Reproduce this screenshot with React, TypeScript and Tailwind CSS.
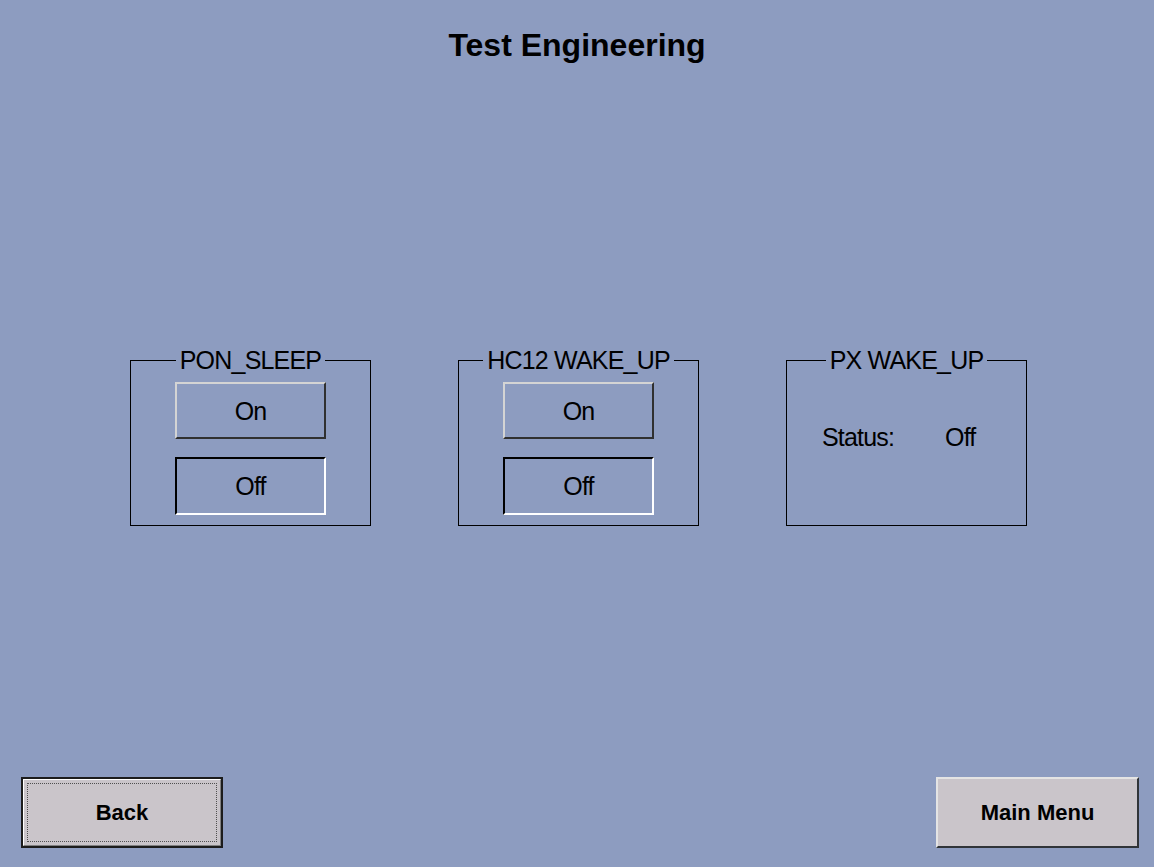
import React from 'react';

const font = { fontFamily: '"Liberation Sans", Arial, sans-serif' };

// raised bevel button sitting on the blue panel
function RaisedButton({ label }: { label: string }) {
  return (
    <button className="w-[151px] h-[57px] bg-transparent border-2 border-t-[#d4d4d4] border-l-[#d4d4d4] border-b-[#303030] border-r-[#303030] text-[25px] leading-[24px] tracking-[-0.8px] text-black">
      {label}
    </button>
  );
}

// pressed (sunken) state
function SunkenButton({ label }: { label: string }) {
  return (
    <button className="w-[151px] h-[58px] bg-transparent border-2 border-t-black border-l-black border-b-white border-r-white text-[25px] leading-[24px] tracking-[-0.8px] text-black">
      {label}
    </button>
  );
}

function GroupBox({ title, children }: { title: string; children: React.ReactNode }) {
  return (
    <fieldset className="w-[241px] h-[178px] border border-black">
      <legend className="mx-auto px-[4px] text-[25px] leading-[24px] tracking-[-0.8px] text-black">{title}</legend>
      {children}
    </fieldset>
  );
}

function ToggleGroup({ title }: { title: string }) {
  return (
    <GroupBox title={title}>
      <div className="flex flex-col items-center pt-[10px] gap-[18px]">
        <RaisedButton label="On" />
        <SunkenButton label="Off" />
      </div>
    </GroupBox>
  );
}

export default function App() {
  return (
    <div className="w-full h-[867px] bg-[#8d9cc0] flex flex-col" style={font}>
      <h1 className="pt-[29px] text-center text-[32px] leading-[32px] font-bold text-black">
        Test Engineering
      </h1>

      <div className="mt-[287px] flex pl-[130px] gap-[87px]">
        <ToggleGroup title="PON_SLEEP" />
        <ToggleGroup title="HC12 WAKE_UP" />
        <GroupBox title="PX WAKE_UP">
          <div className="flex pt-[53px] pl-[35px] text-[25px] leading-[24px] tracking-[-0.8px] text-black">
            <span className="w-[123px]">Status:</span>
            <span>Off</span>
          </div>
        </GroupBox>
      </div>

      <div className="flex-1" />

      <div className="flex justify-between pl-[21px] pr-[15px] pb-[19px]">
        <button className="w-[202px] h-[71px] p-0 bg-[#cac5ca] border-2 border-[#1c1c1c]">
          <span className="block h-full border border-t-white border-l-white border-b-[#808080] border-r-[#808080] p-[3px]">
            <span className="flex h-full items-center justify-center border border-dotted border-[#505050] text-[22px] font-bold text-black">
              Back
            </span>
          </span>
        </button>
        <button className="w-[203px] h-[71px] bg-[#cac5ca] border-2 border-t-[#e4e4e4] border-l-[#e4e4e4] border-b-[#303438] border-r-[#303438] text-[22px] font-bold text-black">
          Main Menu
        </button>
      </div>
    </div>
  );
}
